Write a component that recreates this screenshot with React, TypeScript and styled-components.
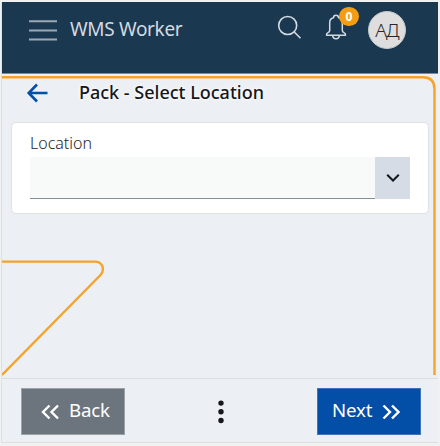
import React from 'react';
import styled, { createGlobalStyle } from 'styled-components';

const GlobalStyle = createGlobalStyle`
  * { box-sizing: border-box; }
  body { margin: 0; background: #f1f3f2; font-family: 'Noto Sans', 'Open Sans', sans-serif; }
  button { font-family: inherit; }
`;

const Frame = styled.div`
  width: 440px;
  height: 446px;
  padding: 2px 2px 3px 1px;
  background: #f0f2f2;
  overflow: hidden;
`;

const Screen = styled.div`
  height: 441px;
  display: flex;
  flex-direction: column;
  background: #eceff4;
  border-left: 1px solid #dee0e2;
  border-bottom: 1px solid #dcdee1;
`;

const Header = styled.header`
  height: 72px;
  flex: none;
  display: flex;
  align-items: flex-start;
  background: #1b3851;
  border-bottom: 1px solid #7c8b99;
  color: #d3dae0;
`;

const IconButton = styled.button<{ $left?: number; $top?: number }>`
  display: flex;
  padding: 0;
  border: 0;
  background: none;
  color: inherit;
  margin: ${p => p.$top ?? 0}px 0 0 ${p => p.$left ?? 0}px;
`;

const AppName = styled.div`
  width: 112px;
  margin: 14px 0 0 13px;
  font-size: 19px;
  letter-spacing: -0.33px;
  line-height: 27px;
  white-space: nowrap;
`;

const BellWrap = styled.div`
  position: relative;
  margin: 12px 0 0 23px;
  width: 22px;
  height: 28px;
`;

const Badge = styled.span`
  position: absolute;
  left: 14px;
  top: -7px;
  width: 20px;
  height: 19px;
  border-radius: 10px;
  background: #f59c15;
  color: #fff;
  font-family: 'Open Sans', sans-serif;
  font-size: 12px;
  font-weight: 700;
  line-height: 20px;
  text-align: center;
`;

const Avatar = styled.div`
  width: 38px;
  height: 38px;
  margin: 9px 0 0 21px;
  border-radius: 50%;
  background: #dedede;
  border: 1px solid #c3c8cc;
  color: #25272b;
  font-size: 19px;
  letter-spacing: -0.9px;
  font-weight: 300;
  line-height: 36px;
  text-align: center;
`;

const Main = styled.main`
  position: relative;
  flex: 1;
`;

const Outline = styled.svg`
  position: absolute;
  left: 0;
  top: 0;
`;

const Content = styled.div`
  position: relative;
`;

const TitleRow = styled.div`
  display: flex;
  height: 48px;
`;

const Title = styled.h1`
  margin: 4px 0 0 31px;
  font-size: 18px;
  line-height: 28px;
  font-weight: 500;
  color: #15171a;
  text-shadow: 0 0 3px #fff, 0 0 4px #fff;
  white-space: nowrap;
`;

const Card = styled.section`
  width: 418px;
  height: 92px;
  margin-left: 9px;
  padding: 9px 18px 0;
  background: #fff;
  border: 1px solid #dee0e3;
  border-radius: 5px;
`;

const Label = styled.label`
  display: block;
  height: 25px;
  font-size: 16px;
  line-height: 23px;
  font-weight: 300;
  color: #25282b;
`;

const Select = styled.div`
  display: flex;
  width: 380px;
  height: 42px;
`;

const Value = styled.div`
  flex: 1;
  background: #f8faf9;
  border-bottom: 1px solid #86909a;
`;

const Toggle = styled.button`
  width: 35px;
  padding: 0;
  display: flex;
  align-items: center;
  justify-content: center;
  border: 0;
  background: #d5dce6;
  color: #15181c;
`;

const Footer = styled.footer`
  height: 64px;
  flex: none;
  display: flex;
  justify-content: space-between;
  align-items: flex-start;
  padding: 9px 17px 0 19px;
  border-top: 1px solid #dcdfe2;
`;

const Action = styled.button<{ $primary?: boolean }>`
  width: 104px;
  height: 47px;
  padding: ${p => (p.$primary ? '0 0 4px 14px' : '0 0 4px 19px')};
  display: flex;
  align-items: center;
  gap: 10px;
  border: 1px solid ${p => (p.$primary ? '#3f74b9' : '#9ba2a8')};
  background: ${p => (p.$primary ? '#034ea6' : '#6c757d')};
  color: #fff;
  font-size: 18.7px;
  letter-spacing: -0.2px;
`;

const ChevronIcon = styled.svg`
  flex: none;
  margin-top: 5px;
`;

const Chevrons = ({ flip }: { flip?: boolean }) => (
  <ChevronIcon width="18" height="16" viewBox="0 0 18 16" fill="none" stroke="currentColor" strokeWidth="2.4">
    <path d={flip ? 'M1.500 1.500 8 8 1.500 14.500M10 1.500 16.500 8 10 14.500' : 'M8.500 1.500 2 8 8.500 14.500M17 1.500 10.500 8 17 14.500'} />
  </ChevronIcon>
);

export default function App() {
  return (
    <>
      <GlobalStyle />
      <Frame>
        <Screen>
          <Header>
            <IconButton $left={27} $top={17} aria-label="Menu">
              <svg width="28" height="23" viewBox="0 0 28 23" stroke="#9ca8b3" strokeWidth="2">
                <path d="M0 2.300H28M0 11.400H28M0 20.500H28" />
              </svg>
            </IconButton>
            <AppName>WMS Worker</AppName>
            <IconButton $left={94} $top={12} aria-label="Search">
              <svg width="26" height="26" viewBox="0 0 26 26" fill="none" stroke="currentColor" strokeWidth="1.600">
                <circle cx="11.700" cy="11.500" r="9" />
                <path d="m18 17.700 6.500 6.500" />
              </svg>
            </IconButton>
            <BellWrap>
              <svg width="22" height="28" viewBox="0 0 22 28" fill="none" stroke="currentColor" strokeWidth="1.500" strokeLinejoin="round">
                <path d="M8.500 3.800C8.500 .4 13.500 .4 13.500 3.800C16.500 4.300 17.300 6.500 17.300 9V16.500Q17.300 18 19 18.600Q20.700 19.200 20.500 21.200H1.500Q1.300 19.200 3 18.600Q4.700 18 4.700 16.500V9C4.700 6.500 5.500 4.300 8.500 3.800Z" />
                <path d="M7.700 21.700C8 25.600 14 25.600 14.300 21.700" />
              </svg>
              <Badge>0</Badge>
            </BellWrap>
            <Avatar>АД</Avatar>
          </Header>
          <Main>
            <Outline width="436" height="302" viewBox="0 0 436 302" fill="none" stroke="#f5a32a" strokeWidth="2.400">
              <path d="M0 3.300H421Q432.500 3.300 432.500 15V301" />
              <path d="M0 187.600H93C100 187.600 103.500 195 98.500 201L0 301" />
            </Outline>
            <Content>
              <TitleRow>
                <IconButton $left={24} $top={9} aria-label="Go back">
                  <svg width="22" height="20" viewBox="0 0 22 20" fill="none" stroke="#0350a8" strokeWidth="2.600">
                    <path d="M21.500 10H3M11 1.500 2.700 10 11 18.500" />
                  </svg>
                </IconButton>
                <Title>Pack - Select Location</Title>
              </TitleRow>
              <Card>
                <Label>Location</Label>
                <Select>
                  <Value />
                  <Toggle aria-label="Open locations">
                    <svg width="14" height="8" viewBox="0 0 14 8" fill="none" stroke="currentColor" strokeWidth="2">
                      <path d="m1.200 .8 5.800 5.700L12.800 .8" />
                    </svg>
                  </Toggle>
                </Select>
              </Card>
            </Content>
          </Main>
          <Footer>
            <Action><Chevrons />Back</Action>
            <IconButton $top={12} aria-label="More actions">
              <svg width="6" height="25" viewBox="0 0 6 25" fill="#15171a">
                <circle cx="3" cy="3.100" r="2.700" />
                <circle cx="3" cy="11.800" r="2.700" />
                <circle cx="3" cy="20.500" r="2.700" />
              </svg>
            </IconButton>
            <Action $primary>Next<Chevrons flip /></Action>
          </Footer>
        </Screen>
      </Frame>
    </>
  );
}
